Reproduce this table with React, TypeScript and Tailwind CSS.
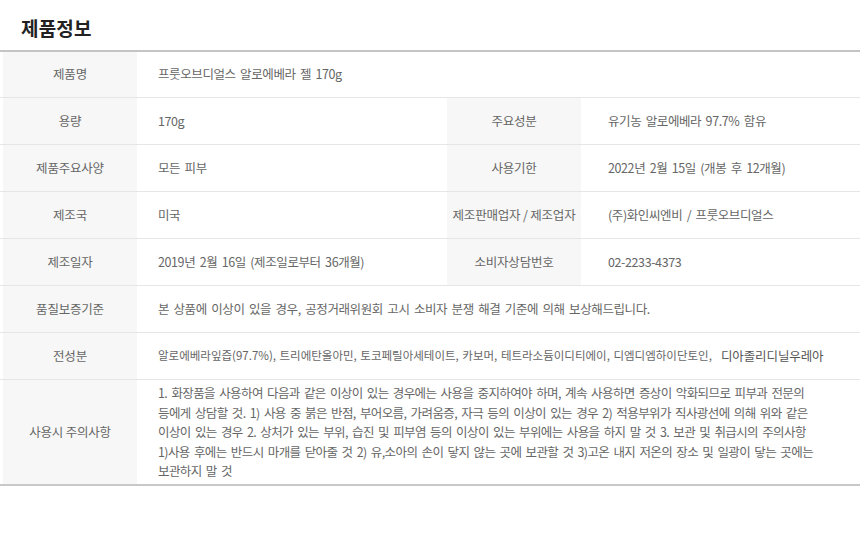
const font = { fontFamily: '"Noto Sans CJK KR", "Noto Sans", sans-serif' };

function Label({ children }: { children: React.ReactNode }) {
  return (
    <div className="flex w-[134px] shrink-0 items-center justify-center whitespace-nowrap bg-[#f7f7f7] text-[12.5px] tracking-[-0.2px] text-[#666]">
      {children}
    </div>
  );
}

function Value({
  children,
  className = "",
}: {
  children: React.ReactNode;
  className?: string;
}) {
  return (
    <div className={`flex items-center text-[#666] ${className}`}>{children}</div>
  );
}

const base = "text-[12.5px] tracking-[-0.4px] [word-spacing:2px]";

const pairs = [
  ["용량", "170g", "주요성분", "유기농 알로에베라 97.7% 함유"],
  ["제품주요사양", "모든 피부", "사용기한", "2022년 2월 15일 (개봉 후 12개월)"],
  ["제조국", "미국", "제조판매업자 / 제조업자", "(주)화인씨엔비 / 프룻오브디얼스"],
  ["제조일자", "2019년 2월 16일 (제조일로부터 36개월)", "소비자상담번호", "02-2233-4373"],
];

export default function App() {
  return (
    <div className="h-[559px] w-[860px] bg-white" style={font}>
      <h1 className="flex h-[50px] items-center pl-[21px] pt-[7px] text-[19px] font-bold tracking-[0.2px] text-[#222]">
        제품정보
      </h1>

      <div className="border-t-2 border-b-2 border-t-[#c4c4c4] border-b-[#c8c8c8]">
        <div className="flex h-[46px] border-b border-[#e6e6e6] pl-[3px]">
          <Label>제품명</Label>
          <Value className={`pl-[21px] ${base}`}>프룻오브디얼스 알로에베라 젤 170g</Value>
        </div>

        {pairs.map(([l1, v1, l2, v2]) => (
          <div key={l1} className="flex h-[47px] border-b border-[#e6e6e6] pl-[3px]">
            <Label>{l1}</Label>
            <Value className={`w-[310px] shrink-0 pl-[21px] ${base}`}>{v1}</Value>
            <Label>{l2}</Label>
            <Value className={`pl-[27px] ${base}`}>{v2}</Value>
          </div>
        ))}

        <div className="flex h-[47px] border-b border-[#e6e6e6] pl-[3px]">
          <Label>품질보증기준</Label>
          <Value className={`pl-[21px] ${base}`}>
            본 상품에 이상이 있을 경우, 공정거래위원회 고시 소비자 분쟁 해결 기준에 의해 보상해드립니다.
          </Value>
        </div>

        <div className="flex h-[47px] border-b border-[#e6e6e6] pl-[3px]">
          <Label>전성분</Label>
          <Value className="whitespace-nowrap pl-[21px] text-[11.5px] [word-spacing:1px]">
            알로에베라잎즙(97.7%), 트리에탄올아민, 토코페릴아세테이트, 카보머, 테트라소듐이디티에이, 디엠디엠하이단토인,
            <span className="ml-[9px] text-[12.5px] tracking-[-0.1px] text-[#555]">디아졸리디닐우레아</span>
          </Value>
        </div>

        <div className="flex h-[104px] pl-[3px]">
          <Label>사용시 주의사항</Label>
          <Value className="whitespace-nowrap pl-[21px] text-[12.5px] leading-[19.5px] tracking-[-0.6px] [word-spacing:2px]">
            <p>
              1. 화장품을 사용하여 다음과 같은 이상이 있는 경우에는 사용을 중지하여야 하며, 계속 사용하면 증상이 악화되므로 피부과 전문의
              <br />
              등에게 상담할 것. 1) 사용 중 붉은 반점, 부어오름, 가려움증, 자극 등의 이상이 있는 경우 2) 적용부위가 직사광선에 의해 위와 같은
              <br />
              이상이 있는 경우 2. 상처가 있는 부위, 습진 및 피부염 등의 이상이 있는 부위에는 사용을 하지 말 것 3. 보관 및 취급시의 주의사항
              <br />
              1)사용 후에는 반드시 마개를 닫아줄 것 2) 유,소아의 손이 닿지 않는 곳에 보관할 것 3)고온 내지 저온의 장소 및 일광이 닿는 곳에는
              <br />
              보관하지 말 것
            </p>
          </Value>
        </div>
      </div>
    </div>
  );
}
